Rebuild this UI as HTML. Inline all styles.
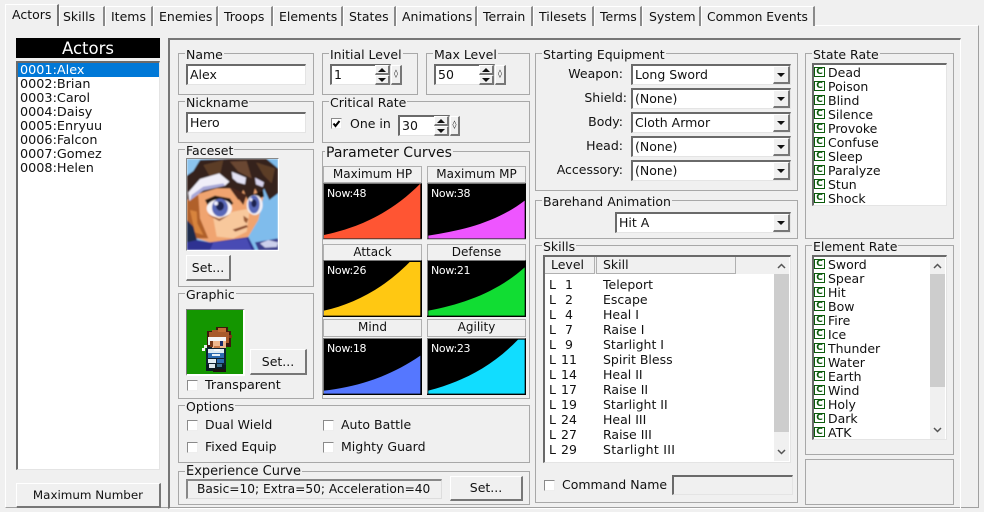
<!DOCTYPE html>
<html><head><meta charset="utf-8"><style>
html,body{margin:0;padding:0;background:#f0f0f0}
#p{position:relative;width:984px;height:512px;overflow:hidden;background:#f0f0f0;font:12.5px/16px "DejaVu Sans",sans-serif;color:#111}
#p div,#p svg{position:absolute;box-sizing:border-box}
.t{white-space:nowrap;height:16px}
.r{font-size:12.8px}
.g{border:1px solid #a8a8a8}
.l{white-space:nowrap;background:#f0f0f0;height:14px;line-height:14px;padding:0 1px;margin-top:1px}
.i{background:#fff;border-style:solid;border-width:2px 1px 1px 2px;border-color:#6a6a6a #e4e4e4 #e4e4e4 #6a6a6a;padding-left:2px;line-height:17px;white-space:nowrap}
.b{background:#f0f0f0;border-style:solid;border-width:1px 2px 2px 1px;border-color:#fff #777 #777 #fff;text-align:center;white-space:nowrap;line-height:22px}
.c{width:11px;height:11px;background:#fff;border-style:solid;border-width:1px;border-color:#8a8a8a #eee #eee #8a8a8a}
.a{width:0;height:0;border-left:4px solid transparent;border-right:4px solid transparent}
.dn{border-top:4px solid #111}
.up{border-bottom:4px solid #111}
.tb{background:#f0f0f0;border-right:2px solid #8a8a8a;border-left:1px solid #fff;border-top:1px solid #fff;height:20px;top:6px}
.cap{border:1px solid #b0b0b0;background:#f0f0f0;text-align:center;line-height:15px;white-space:nowrap;font-size:12px}
.ic{width:11px;height:10px;background:#fff;border:1px solid #0a5a0a;color:#0a5a0a;font:bold 9px/8px "DejaVu Sans",sans-serif;text-align:center}
.sp{font-weight:bold;font-size:8px;line-height:16px}
.n{color:#fff;font-size:11px;letter-spacing:-.3px}
</style></head><body><div id="p">

<!-- tab page -->
<div style="left:5px;top:25px;width:974px;height:483px;border:1px solid #fff;border-right:1px solid #a0a0a0;border-bottom:1px solid #a0a0a0"></div>
<div class="tb" style="left:59px;width:46px"></div>
<div class="tb" style="left:105px;width:48px"></div>
<div class="tb" style="left:153px;width:65px"></div>
<div class="tb" style="left:218px;width:55px"></div>
<div class="tb" style="left:273px;width:70px"></div>
<div class="tb" style="left:343px;width:53px"></div>
<div class="tb" style="left:396px;width:81px"></div>
<div class="tb" style="left:477px;width:56px"></div>
<div class="tb" style="left:533px;width:61px"></div>
<div class="tb" style="left:594px;width:48px"></div>
<div class="tb" style="left:642px;width:59px"></div>
<div class="tb" style="left:701px;width:114px"></div>
<div style="left:5px;top:4px;width:54px;height:22px;background:#f0f0f0;border-top:1px solid #fff;border-left:1px solid #fff;border-right:2px solid #777"></div>
<div class="t" style="left:12px;top:7px">Actors</div>
<div class="t" style="left:63px;top:9px">Skills</div>
<div class="t" style="left:111px;top:9px">Items</div>
<div class="t" style="left:159px;top:9px">Enemies</div>
<div class="t" style="left:224px;top:9px">Troops</div>
<div class="t" style="left:279px;top:9px">Elements</div>
<div class="t" style="left:349px;top:9px">States</div>
<div class="t" style="left:402px;top:9px">Animations</div>
<div class="t" style="left:483px;top:9px">Terrain</div>
<div class="t" style="left:539px;top:9px">Tilesets</div>
<div class="t" style="left:600px;top:9px">Terms</div>
<div class="t" style="left:649px;top:9px">System</div>
<div class="t" style="left:707px;top:9px;font-size:12.3px">Common Events</div>

<!-- actor list -->
<div style="left:16px;top:38px;width:144px;height:20px;background:#000;color:#fff;text-align:center;font-size:16.5px;line-height:21px">Actors</div>
<div class="i" style="left:16px;top:61px;width:144px;height:409px"></div>
<div style="left:18px;top:63px;width:141px;height:14px;background:#0078d7"></div>
<div class="t r" style="left:20px;top:63px;color:#fff">0001:Alex</div>
<div class="t r" style="left:20px;top:77px">0002:Brian</div>
<div class="t r" style="left:20px;top:91px">0003:Carol</div>
<div class="t r" style="left:20px;top:105px">0004:Daisy</div>
<div class="t r" style="left:20px;top:119px">0005:Enryuu</div>
<div class="t r" style="left:20px;top:133px">0006:Falcon</div>
<div class="t r" style="left:20px;top:147px">0007:Gomez</div>
<div class="t r" style="left:20px;top:161px">0008:Helen</div>
<div class="b" style="left:16px;top:483px;width:145px;height:25px;font-size:11.9px">Maximum Number</div>

<!-- main panel -->
<div style="left:168px;top:38px;width:793px;height:471px;border-style:solid;border-width:2px 1px 1px 2px;border-color:#777 #fff #fff #777"></div>

<!-- name -->
<div class="g" style="left:178px;top:53px;width:136px;height:42px"></div>
<div class="l" style="left:185px;top:47px">Name</div>
<div class="i" style="left:186px;top:64px;width:120px;height:21px">Alex</div>
<div class="g" style="left:178px;top:101px;width:136px;height:42px"></div>
<div class="l" style="left:185px;top:95px">Nickname</div>
<div class="i" style="left:186px;top:112px;width:120px;height:21px">Hero</div>

<!-- faceset -->
<div class="g" style="left:178px;top:149px;width:136px;height:138px"></div>
<div class="l" style="left:185px;top:143px">Faceset</div>
<div style="left:186px;top:158px;width:93px;height:93px;background:#fff;border:1px solid #fff;border-top-color:#888;border-left-color:#888"></div>
<svg style="left:187px;top:159px" width="91" height="91" viewBox="21 12 273 273" preserveAspectRatio="none">
<defs><filter id="f" x="0" y="0" width="100%" height="100%"><feGaussianBlur stdDeviation="2.200"/></filter><clipPath id="cp"><rect x="21" y="12" width="273" height="273"/></clipPath></defs>
<g clip-path="url(#cp)"><g filter="url(#f)">
<rect x="21" y="12" width="273" height="273" fill="#7fbcec"/>
<!-- face -->
<polygon points="21,120 21,215 50,250 90,262 160,262 205,245 235,195 250,125 225,95 130,80 60,100" fill="#f0a470"/>
<polygon points="100,190 160,170 210,160 200,230 160,250 110,245" fill="#f8c89c"/>
<polygon points="21,130 55,120 60,190 85,250 50,250 21,225" fill="#b0602c"/>
<polygon points="30,165 50,170 52,205 70,240 45,232" fill="#d8843c"/>
<polygon points="21,195 40,215 55,270 21,285" fill="#1d2a4c"/>
<!-- hair -->
<polygon points="21,60 60,15 150,12 260,12 294,40 294,115 268,135 252,100 240,130 225,100 212,155 190,105 175,135 150,100 110,100 60,115 21,135" fill="#35201a"/>
<polygon points="70,30 130,15 120,60 90,65" fill="#5c3c28"/>
<polygon points="150,20 200,18 215,70 175,50" fill="#6a4630"/>
<polygon points="228,22 285,40 275,85 250,60" fill="#5c3c28"/>
<polygon points="150,95 200,120 190,150 170,125" fill="#47281a"/>
<polygon points="21,12 62,12 40,48 21,62" fill="#8cc4ee"/>
<!-- headband -->
<polygon points="25,112 60,72 118,55 148,80 135,92 70,106 28,138" fill="#f0eef8"/>
<polygon points="35,120 70,95 130,85 135,92 70,106 30,136" fill="#a8a8d8"/>
<polygon points="155,50 198,68 195,88 172,82 158,70" fill="#e4e2f4"/>
<polygon points="225,68 252,82 248,96 228,88" fill="#d8d4ee"/>
<!-- left eye -->
<polygon points="75,135 105,122 150,130 160,145 148,155 105,140 85,155" fill="#20120e"/>
<ellipse cx="118" cy="160" rx="38" ry="27" fill="#f8f4f8"/>
<ellipse cx="120" cy="158" rx="24" ry="27" fill="#5868b8"/>
<ellipse cx="120" cy="153" rx="12" ry="14" fill="#1c2050"/>
<ellipse cx="108" cy="145" rx="6" ry="6" fill="#eef"/>
<polygon points="82,178 118,192 150,178 118,198" fill="#8a4a2a"/>
<!-- right eye -->
<polygon points="205,122 250,108 252,125 212,140" fill="#20120e"/>
<ellipse cx="224" cy="150" rx="24" ry="30" fill="#f4f0f4"/>
<ellipse cx="222" cy="148" rx="17" ry="27" fill="#5868b8"/>
<ellipse cx="222" cy="145" rx="8" ry="12" fill="#1c2050"/>
<ellipse cx="213" cy="134" rx="4" ry="5" fill="#eef"/>
<!-- nose & mouth -->
<polygon points="190,182 205,192 200,205 192,198" fill="#9a5a34"/>
<polygon points="158,224 200,210 204,216 166,230" fill="#8a4a2a"/>
<!-- clothes -->
<polygon points="21,262 50,255 90,262 205,246 225,285 21,285" fill="#2f3092"/>
<polygon points="100,262 200,250 215,285 90,285" fill="#4a4cb4"/>
<polygon points="225,262 294,250 294,285 235,285" fill="#3a3c8c"/>
<polygon points="240,265 265,255 294,262 290,276 255,278" fill="#ccd0ec"/>
</g></g></svg>
<div class="b" style="left:186px;top:255px;width:45px;height:26px;line-height:24px">Set...</div>

<!-- graphic -->
<div class="g" style="left:178px;top:293px;width:136px;height:106px"></div>
<div class="l" style="left:185px;top:287px">Graphic</div>
<div style="left:186px;top:309px;width:59px;height:67px;background:#149600;border-style:solid;border-width:1px 2px 2px 1px;border-color:#777 #fff #fff #777"></div>
<svg style="left:186px;top:309px" width="59" height="67" viewBox="18 12 177 201" shape-rendering="crispEdges">
<!-- outline -->
<rect x="81" y="78" width="72" height="48" fill="#3c1a0c"/>
<rect x="108" y="66" width="36" height="15" fill="#3c1a0c"/>
<rect x="78" y="126" width="60" height="54" fill="#0e2230"/>
<rect x="78" y="180" width="60" height="18" fill="#0a1a22"/>
<!-- hair -->
<rect x="87" y="81" width="60" height="15" fill="#a85a2a"/>
<rect x="114" y="69" width="24" height="12" fill="#c06c34"/>
<rect x="96" y="75" width="18" height="9" fill="#a85a2a"/>
<rect x="138" y="96" width="9" height="18" fill="#a85a2a"/>
<rect x="147" y="90" width="9" height="9" fill="#7a3a18"/>
<!-- headband -->
<rect x="84" y="96" width="54" height="12" fill="#f6f6f6"/>
<rect x="84" y="108" width="6" height="12" fill="#e8f2f2"/>
<rect x="72" y="120" width="9" height="9" fill="#e8f0e8"/>
<rect x="66" y="129" width="9" height="9" fill="#f4f8f4"/>
<!-- face -->
<rect x="96" y="108" width="42" height="21" fill="#f0b88c"/>
<rect x="120" y="108" width="9" height="15" fill="#1c2c6a"/>
<rect x="90" y="108" width="9" height="18" fill="#7a3a18"/>
<rect x="102" y="123" width="18" height="6" fill="#c87a48"/>
<!-- body -->
<rect x="84" y="132" width="48" height="12" fill="#dcecf4"/>
<rect x="102" y="132" width="18" height="6" fill="#f4f8fa"/>
<rect x="84" y="144" width="48" height="15" fill="#2c6cb0"/>
<rect x="96" y="147" width="24" height="6" fill="#e8f2f8"/>
<rect x="84" y="162" width="24" height="12" fill="#e0ecf2"/>
<rect x="111" y="162" width="21" height="12" fill="#2c6cb0"/>
<rect x="87" y="177" width="18" height="12" fill="#dce8ec"/>
<rect x="111" y="177" width="15" height="9" fill="#39708c"/>
<rect x="99" y="192" width="39" height="9" fill="#1a1410"/>
</svg>
<div class="b" style="left:250px;top:349px;width:57px;height:26px;line-height:24px">Set...</div>
<div class="c" style="left:187px;top:380px"></div>
<div class="t" style="left:205px;top:378px;font-size:12.8px">Transparent</div>

<!-- initial level -->
<div class="g" style="left:322px;top:53px;width:96px;height:42px"></div>
<div class="l" style="left:329px;top:47px">Initial Level</div>
<div class="i" style="left:330px;top:64px;width:61px;height:21px">1</div>
<div class="b" style="left:375px;top:65px;width:15px;height:10px"></div><div class="a up" style="left:378px;top:68px"></div>
<div class="b" style="left:375px;top:75px;width:15px;height:10px"></div><div class="a dn" style="left:378px;top:78px"></div>
<div class="b sp" style="left:391px;top:65px;width:11px;height:20px">◊</div>

<div class="g" style="left:426px;top:53px;width:104px;height:42px"></div>
<div class="l" style="left:433px;top:47px">Max Level</div>
<div class="i" style="left:434px;top:64px;width:61px;height:21px">50</div>
<div class="b" style="left:479px;top:65px;width:15px;height:10px"></div><div class="a up" style="left:482px;top:68px"></div>
<div class="b" style="left:479px;top:75px;width:15px;height:10px"></div><div class="a dn" style="left:482px;top:78px"></div>
<div class="b sp" style="left:495px;top:65px;width:11px;height:20px">◊</div>

<!-- critical -->
<div class="g" style="left:322px;top:101px;width:208px;height:42px"></div>
<div class="l" style="left:329px;top:95px">Critical Rate</div>
<div class="c" style="left:331px;top:118px"></div>
<svg style="left:331px;top:118px" width="11" height="11" viewBox="0 0 11 11"><path d="M2.500 5.500L4.500 8L8.500 3" fill="none" stroke="#000" stroke-width="2"/></svg>
<div class="t" style="left:350px;top:116px">One in</div>
<div class="i" style="left:398px;top:115px;width:52px;height:21px">30</div>
<div class="b" style="left:434px;top:116px;width:15px;height:10px"></div><div class="a up" style="left:437px;top:119px"></div>
<div class="b" style="left:434px;top:126px;width:15px;height:10px"></div><div class="a dn" style="left:437px;top:129px"></div>
<div class="b sp" style="left:450px;top:116px;width:10px;height:20px">◊</div>

<!-- parameter curves -->
<div class="g" style="left:322px;top:151px;width:208px;height:248px"></div>
<div class="l" style="left:325px;top:145px;font-size:14px">Parameter Curves</div>

<div class="cap" style="left:323px;top:166px;width:99px;height:17px">Maximum HP</div>
<div class="cap" style="left:427px;top:166px;width:99px;height:17px">Maximum MP</div>
<div class="cap" style="left:323px;top:244px;width:99px;height:17px">Attack</div>
<div class="cap" style="left:427px;top:244px;width:99px;height:17px">Defense</div>
<div class="cap" style="left:323px;top:319px;width:99px;height:18px;line-height:14px">Mind</div>
<div class="cap" style="left:427px;top:319px;width:99px;height:18px;line-height:14px">Agility</div>

<svg style="left:323px;top:183px" width="99" height="57" viewBox="10 70 297 171"><rect x="10" y="70" width="297" height="171" fill="#000"/><path d="M13,226C100,208 205,170 302,72V236H13Z" fill="#ff5533"/><path d="M11.500 237V71.500H305.500" fill="none" stroke="#777" stroke-width="3"/><path d="M10 239H307" stroke="#ddd" stroke-width="3"/></svg>
<svg style="left:427px;top:183px" width="99" height="57" viewBox="322 70 297 171"><rect x="322" y="70" width="297" height="171" fill="#000"/><path d="M326,228C430,212 530,188 615,123V236H326Z" fill="#ee55ff"/><path d="M323.500 237V71.500H617.500" fill="none" stroke="#777" stroke-width="3"/><path d="M322 239H619" stroke="#ddd" stroke-width="3"/></svg>
<svg style="left:323px;top:260px" width="99" height="57" viewBox="10 300 297 171"><rect x="10" y="300" width="297" height="171" fill="#000"/><path d="M13,452C100,432 190,388 270,306H302V467H13Z" fill="#ffc812"/><path d="M11.500 467V301.500H305.500" fill="none" stroke="#777" stroke-width="3"/></svg>
<svg style="left:427px;top:260px" width="99" height="57" viewBox="322 300 297 171"><rect x="322" y="300" width="297" height="171" fill="#000"/><path d="M326,452C430,432 530,398 615,322V467H326Z" fill="#11dd33"/><path d="M323.500 467V301.500H617.500" fill="none" stroke="#777" stroke-width="3"/></svg>
<svg style="left:323px;top:338px" width="99" height="57" viewBox="10 535 297 171"><rect x="10" y="535" width="297" height="171" fill="#000"/><path d="M13,693C110,682 210,652 302,588V702H13Z" fill="#5577ff"/><path d="M11.500 702V536.500H305.500" fill="none" stroke="#777" stroke-width="3"/></svg>
<svg style="left:427px;top:338px" width="99" height="57" viewBox="322 535 297 171"><rect x="322" y="535" width="297" height="171" fill="#000"/><path d="M326,693C420,668 510,628 595,540H615V702H326Z" fill="#11ddff"/><path d="M323.500 702V536.500H617.500" fill="none" stroke="#777" stroke-width="3"/></svg>

<div class="t n" style="left:327px;top:186px">Now:48</div>
<div class="t n" style="left:431px;top:186px">Now:38</div>
<div class="t n" style="left:327px;top:263px">Now:26</div>
<div class="t n" style="left:431px;top:263px">Now:21</div>
<div class="t n" style="left:327px;top:341px">Now:18</div>
<div class="t n" style="left:431px;top:341px">Now:23</div>

<!-- options -->
<div class="g" style="left:178px;top:405px;width:352px;height:58px"></div>
<div class="l" style="left:185px;top:399px">Options</div>
<div class="c" style="left:187px;top:420px"></div><div class="t" style="left:205px;top:417px">Dual Wield</div>
<div class="c" style="left:323px;top:420px"></div><div class="t" style="left:341px;top:417px">Auto Battle</div>
<div class="c" style="left:187px;top:442px"></div><div class="t" style="left:205px;top:439px">Fixed Equip</div>
<div class="c" style="left:323px;top:442px"></div><div class="t" style="left:341px;top:439px">Mighty Guard</div>

<!-- experience -->
<div class="g" style="left:178px;top:471px;width:352px;height:34px"></div>
<div class="l" style="left:185px;top:464px;font-size:13px">Experience Curve</div>
<div class="i" style="left:186px;top:479px;width:256px;height:20px;background:#f0f0f0;padding-left:9px;line-height:16px;border-color:#888 #ddd #ddd #888;font-size:12.2px">Basic=10; Extra=50; Acceleration=40</div>
<div class="b" style="left:450px;top:476px;width:73px;height:25px;line-height:22px">Set...</div>

<!-- starting equipment -->
<div class="g" style="left:535px;top:53px;width:263px;height:138px"></div>
<div class="l" style="left:542px;top:47px">Starting Equipment</div>
<div class="t" style="right:361px;top:66px">Weapon:</div>
<div class="t" style="right:357px;top:90px">Shield:</div>
<div class="t" style="right:361px;top:114px">Body:</div>
<div class="t" style="right:361px;top:138px">Head:</div>
<div class="t" style="right:361px;top:162px">Accessory:</div>
<div class="i" style="left:631px;top:64px;width:160px;height:21px">Long Sword</div>
<div class="i" style="left:631px;top:88px;width:160px;height:21px">(None)</div>
<div class="i" style="left:631px;top:112px;width:160px;height:21px">Cloth Armor</div>
<div class="i" style="left:631px;top:136px;width:160px;height:21px">(None)</div>
<div class="i" style="left:631px;top:160px;width:160px;height:21px">(None)</div>
<div class="b" style="left:773px;top:66px;width:17px;height:18px"></div><div class="a dn" style="left:777px;top:73px"></div>
<div class="b" style="left:773px;top:90px;width:17px;height:18px"></div><div class="a dn" style="left:777px;top:97px"></div>
<div class="b" style="left:773px;top:114px;width:17px;height:18px"></div><div class="a dn" style="left:777px;top:121px"></div>
<div class="b" style="left:773px;top:138px;width:17px;height:18px"></div><div class="a dn" style="left:777px;top:145px"></div>
<div class="b" style="left:773px;top:162px;width:17px;height:18px"></div><div class="a dn" style="left:777px;top:169px"></div>

<!-- barehand -->
<div class="g" style="left:535px;top:200px;width:263px;height:39px"></div>
<div class="l" style="left:542px;top:194px">Barehand Animation</div>
<div class="i" style="left:615px;top:212px;width:176px;height:21px">Hit A</div>
<div class="b" style="left:773px;top:214px;width:17px;height:18px"></div><div class="a dn" style="left:777px;top:221px"></div>

<!-- skills -->
<div class="g" style="left:535px;top:245px;width:263px;height:258px"></div>
<div class="l" style="left:542px;top:239px">Skills</div>
<div class="i" style="left:543px;top:255px;width:248px;height:208px"></div>
<div style="left:545px;top:257px;width:244px;height:17px;background:#f0f0f0"></div>
<div class="cap" style="left:545px;top:257px;width:50px;height:17px;border-width:0 1px 1px 0;text-align:left;padding-left:6px;font-size:12.5px">Level</div>
<div class="cap" style="left:596px;top:257px;width:140px;height:17px;border-width:0 1px 1px 1px;text-align:left;padding-left:6px;font-size:12.5px">Skill</div>
<div style="left:774px;top:257px;width:15px;height:204px;background:#f0f0f0"></div>
<div style="left:774px;top:274px;width:15px;height:158px;background:#cdcdcd"></div>
<svg style="left:774px;top:258px" width="15" height="203" viewBox="0 0 15 203"><path d="M4 10L7.500 6.500L11 10M4 192L7.500 195.500L11 192" fill="none" stroke="#555" stroke-width="1.500"/></svg>
<div class="t" style="left:549px;top:277px">L</div><div class="t" style="left:565px;top:277px">1</div><div class="t" style="left:603px;top:277px">Teleport</div>
<div class="t" style="left:549px;top:292px">L</div><div class="t" style="left:565px;top:292px">2</div><div class="t" style="left:603px;top:292px">Escape</div>
<div class="t" style="left:549px;top:307px">L</div><div class="t" style="left:565px;top:307px">4</div><div class="t" style="left:603px;top:307px">Heal I</div>
<div class="t" style="left:549px;top:322px">L</div><div class="t" style="left:565px;top:322px">7</div><div class="t" style="left:603px;top:322px">Raise I</div>
<div class="t" style="left:549px;top:337px">L</div><div class="t" style="left:565px;top:337px">9</div><div class="t" style="left:603px;top:337px">Starlight I</div>
<div class="t" style="left:549px;top:352px">L</div><div class="t" style="left:561px;top:352px">11</div><div class="t" style="left:603px;top:352px">Spirit Bless</div>
<div class="t" style="left:549px;top:367px">L</div><div class="t" style="left:561px;top:367px">14</div><div class="t" style="left:603px;top:367px">Heal II</div>
<div class="t" style="left:549px;top:382px">L</div><div class="t" style="left:561px;top:382px">17</div><div class="t" style="left:603px;top:382px">Raise II</div>
<div class="t" style="left:549px;top:397px">L</div><div class="t" style="left:561px;top:397px">19</div><div class="t" style="left:603px;top:397px">Starlight II</div>
<div class="t" style="left:549px;top:412px">L</div><div class="t" style="left:561px;top:412px">24</div><div class="t" style="left:603px;top:412px">Heal III</div>
<div class="t" style="left:549px;top:427px">L</div><div class="t" style="left:561px;top:427px">27</div><div class="t" style="left:603px;top:427px">Raise III</div>
<div class="t" style="left:549px;top:442px">L</div><div class="t" style="left:561px;top:442px">29</div><div class="t" style="left:603px;top:442px;letter-spacing:.3px">Starlight III</div>
<div class="c" style="left:544px;top:480px"></div>
<div class="t" style="left:562px;top:477px">Command Name</div>
<div class="i" style="left:672px;top:475px;width:121px;height:20px;background:#f0f0f0"></div>

<!-- state rate -->
<div class="g" style="left:805px;top:53px;width:149px;height:186px"></div>
<div class="l" style="left:812px;top:47px">State Rate</div>
<div class="i" style="left:812px;top:63px;width:135px;height:143px"></div>
<div class="ic" style="left:814px;top:67px">C</div><div class="t" style="left:828px;top:65px">Dead</div>
<div class="ic" style="left:814px;top:81px">C</div><div class="t" style="left:828px;top:79px">Poison</div>
<div class="ic" style="left:814px;top:95px">C</div><div class="t" style="left:828px;top:93px">Blind</div>
<div class="ic" style="left:814px;top:109px">C</div><div class="t" style="left:828px;top:107px">Silence</div>
<div class="ic" style="left:814px;top:123px">C</div><div class="t" style="left:828px;top:121px">Provoke</div>
<div class="ic" style="left:814px;top:137px">C</div><div class="t" style="left:828px;top:135px">Confuse</div>
<div class="ic" style="left:814px;top:151px">C</div><div class="t" style="left:828px;top:149px">Sleep</div>
<div class="ic" style="left:814px;top:165px">C</div><div class="t" style="left:828px;top:163px">Paralyze</div>
<div class="ic" style="left:814px;top:179px">C</div><div class="t" style="left:828px;top:177px">Stun</div>
<div class="ic" style="left:814px;top:193px">C</div><div class="t" style="left:828px;top:191px">Shock</div>

<!-- element rate -->
<div class="g" style="left:805px;top:245px;width:149px;height:210px"></div>
<div class="l" style="left:812px;top:239px">Element Rate</div>
<div class="i" style="left:812px;top:255px;width:135px;height:185px"></div>
<div style="left:930px;top:257px;width:15px;height:182px;background:#f0f0f0"></div>
<div style="left:930px;top:274px;width:15px;height:113px;background:#cdcdcd"></div>
<svg style="left:930px;top:257px" width="15" height="182" viewBox="0 0 15 182"><path d="M4 11L7.500 7.500L11 11M4 171L7.500 174.500L11 171" fill="none" stroke="#555" stroke-width="1.500"/></svg>
<div class="ic" style="left:814px;top:259px">C</div><div class="t" style="left:828px;top:257px">Sword</div>
<div class="ic" style="left:814px;top:273px">C</div><div class="t" style="left:828px;top:271px">Spear</div>
<div class="ic" style="left:814px;top:287px">C</div><div class="t" style="left:828px;top:285px">Hit</div>
<div class="ic" style="left:814px;top:301px">C</div><div class="t" style="left:828px;top:299px">Bow</div>
<div class="ic" style="left:814px;top:315px">C</div><div class="t" style="left:828px;top:313px">Fire</div>
<div class="ic" style="left:814px;top:329px">C</div><div class="t" style="left:828px;top:327px">Ice</div>
<div class="ic" style="left:814px;top:343px">C</div><div class="t" style="left:828px;top:341px">Thunder</div>
<div class="ic" style="left:814px;top:357px">C</div><div class="t" style="left:828px;top:355px">Water</div>
<div class="ic" style="left:814px;top:371px">C</div><div class="t" style="left:828px;top:369px">Earth</div>
<div class="ic" style="left:814px;top:385px">C</div><div class="t" style="left:828px;top:383px">Wind</div>
<div class="ic" style="left:814px;top:399px">C</div><div class="t" style="left:828px;top:397px">Holy</div>
<div class="ic" style="left:814px;top:413px">C</div><div class="t" style="left:828px;top:411px">Dark</div>
<div class="ic" style="left:814px;top:427px">C</div><div class="t" style="left:828px;top:425px">ATK</div>

<div class="g" style="left:805px;top:459px;width:149px;height:46px"></div>
</div></body></html>
